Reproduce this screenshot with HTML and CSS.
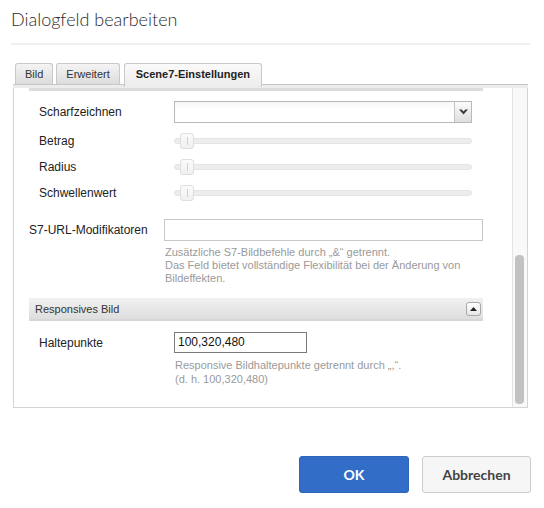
FILE: index.html
```html
<!DOCTYPE html>
<html lang="de">
<head>
<meta charset="utf-8">
<title>Dialogfeld bearbeiten</title>
<link rel="stylesheet" href="styles.css">
</head>
<body>
<div class="dialog">
  <h1 class="title">Dialogfeld bearbeiten</h1>
  <div class="rule"></div>
  <div class="tabs">
    <div class="tab">Bild</div>
    <div class="tab">Erweitert</div>
    <div class="tab active">Scene7-Einstellungen</div>
  </div>
  <div class="panel">
    <div class="strip"></div>
    <div class="panel-body">
      <div class="content">
        <div class="topbar"></div>
        <div class="fs">
          <div class="row sel-row">
            <div class="label">Scharfzeichnen</div>
            <div class="select">
              <div class="select-field"></div>
              <div class="select-btn">
                <svg width="9" height="6" viewBox="0 0 9 6"><path d="M0 0.5 H2.6 L4.5 2.6 L6.4 0.5 H9 L4.5 5.5 Z" fill="#3a3a3a"/></svg>
              </div>
            </div>
          </div>
          <div class="row slider-row first">
            <div class="label">Betrag</div>
            <div class="slider"><div class="track"></div><div class="thumb"></div></div>
          </div>
          <div class="row slider-row">
            <div class="label">Radius</div>
            <div class="slider"><div class="track"></div><div class="thumb"></div></div>
          </div>
          <div class="row slider-row">
            <div class="label">Schwellenwert</div>
            <div class="slider"><div class="track"></div><div class="thumb"></div></div>
          </div>
        </div>
        <div class="row url-row">
          <div class="label">S7-URL-Modifikatoren</div>
          <div class="input"></div>
        </div>
        <div class="help help-url">Zusätzliche S7-Bildbefehle durch „&amp;“ getrennt.<br>Das Feld bietet vollständige Flexibilität bei der Änderung von<br>Bildeffekten.</div>
        <div class="section-header">
          <span>Responsives Bild</span>
          <div class="collapse">
            <svg width="7" height="4" viewBox="0 0 7 4"><path d="M0 4 L3.5 0 L7 4 Z" fill="#222"/></svg>
          </div>
        </div>
        <div class="section-body">
          <div class="row hp-row">
            <div class="label">Haltepunkte</div>
            <div class="input value">100,320,480</div>
          </div>
          <div class="help help-hp">Responsive Bildhaltepunkte getrennt durch „,“.<br>(d. h. 100,320,480)</div>
        </div>
      </div>
      <div class="scrollbar"><div class="sb-thumb"></div></div>
    </div>
  </div>
  <div class="actions">
    <button class="btn primary">OK</button>
    <button class="btn secondary">Abbrechen</button>
  </div>
</div>
</body>
</html>
```

FILE: styles.css
```css
* { box-sizing: border-box; }
html, body { margin: 0; padding: 0; background: #fff; }
body { font-family: "Liberation Sans", Arial, sans-serif; color: #222; }

.dialog { width: 544px; height: 508px; }

.title {
  margin: 0;
  padding: 8px 0 0 11px;
  font-family: Lato, "Open Sans", sans-serif;
  font-weight: 300;
  font-size: 18px;
  line-height: 22px;
  color: #2c2c2c;
}

.rule {
  margin: 13px 14px 0 11px;
  height: 2px;
  background: #efefef;
}

.tabs {
  margin-top: 18px;
  padding-left: 15px;
  display: flex;
  align-items: flex-end;
  gap: 3px;
  height: 21px;
  position: relative;
  z-index: 2;
}
.tab {
  height: 21px;
  padding: 0 9px;
  border: 1px solid #c8c8c8;
  border-bottom: none;
  border-radius: 3px 3px 0 0;
  background: linear-gradient(#f4f4f4, #dcdcdc);
  font-size: 11px;
  line-height: 20px;
  color: #333;
}
.tab.active {
  height: 24px;
  margin-bottom: -3px;
  margin-left: 1px;
  padding: 0 11px;
  background: linear-gradient(#fafafa, #ececec);
  font-weight: bold;
  color: #222;
}

.panel {
  margin-left: 13px;
  width: 515px;
  border: 1px solid #d4d4d4;
  border-top: none;
  position: relative;
  z-index: 1;
}
.strip {
  height: 4px;
  border-top: 1px solid #c8c8c8;
  background: #ececec;
  margin: 0 -1px;
}
.panel-body {
  display: flex;
  height: 319px;
}
.content {
  flex: 1;
  overflow: hidden;
  padding: 0 29px 0 15px;
}
.topbar { height: 3px; background: #dcdcdc; }

.row { display: flex; align-items: center; }
.label { width: 135px; flex: none; font-size: 12px; color: #222; }

.fs { padding: 0 11px 0 10px; }
.sel-row { margin-top: 10px; height: 22px; }
.select {
  flex: 1;
  height: 22px;
  display: flex;
  border: 1px solid #b8b8b8;
}
.select-field { flex: 1; background: linear-gradient(#f6f6f6, #fff 40%); }
.select-btn {
  width: 17px;
  border-left: 1px solid #c4c4c4;
  background: linear-gradient(#fbfbfb, #dedede);
  display: flex;
  align-items: center;
  justify-content: center;
}

.slider-row { height: 26px; }
.slider-row.first { margin-top: 5px; }
.slider { flex: 1; position: relative; height: 16px; display: flex; align-items: center; }
.track {
  flex: 1;
  height: 6px;
  border-radius: 3px;
  background: #ededed;
  border: 1px solid #e4e4e4;
}
.thumb {
  position: absolute;
  left: 6px;
  top: 0;
  width: 14px;
  height: 16px;
  border: 1px solid #dedede;
  border-radius: 3px;
  background: linear-gradient(#fbfbfb, #f0f0f0);
}
.thumb::after {
  content: "";
  position: absolute;
  left: 6px;
  top: 3px;
  width: 1px;
  height: 8px;
  background: #cfcfcf;
}

.url-row { margin-top: 13px; height: 22px; }
.input {
  height: 22px;
  flex: 1;
  border: 1px solid #c6c6c6;
  background: #fff;
}

.help {
  font-size: 11px;
  color: #9a9a9a;
  line-height: 13px;
}
.help-url { margin: 5px 0 0 136px; }

.section-header {
  margin-top: 13px;
  height: 23px;
  padding: 0 2px 0 6px;
  display: flex;
  align-items: center;
  justify-content: space-between;
  background: linear-gradient(#f1f1f1, #dedede);
  border-bottom: 2px solid #d6d6d6;
  font-size: 11px;
  color: #333;
}
.collapse {
  width: 15px;
  height: 14px;
  border: 1px solid #a8a8a8;
  border-radius: 3px;
  background: linear-gradient(#fff, #e6e6e6);
  display: flex;
  align-items: center;
  justify-content: center;
}

.section-body { padding-left: 10px; }
.hp-row { margin-top: 11px; height: 21px; }
.input.value {
  flex: none;
  width: 133px;
  height: 21px;
  border-color: #7a7a7a;
  font-size: 12px;
  line-height: 19px;
  padding-left: 3px;
  color: #111;
}
.help-hp { margin: 5px 0 0 136px; line-height: 14px; }

.scrollbar {
  width: 15px;
  border-left: 1px solid #e4e4e4;
  background: #f9f9f9;
  position: relative;
}
.sb-thumb {
  position: absolute;
  left: 2px;
  top: 167px;
  width: 9px;
  height: 149px;
  border-radius: 4px;
  background: #c2c2c2;
}

.actions {
  margin-top: 48px;
  padding-right: 13px;
  display: flex;
  justify-content: flex-end;
  gap: 13px;
}
.btn {
  height: 37px;
  border-radius: 3px;
  font-family: Lato, "Open Sans", sans-serif;
  font-weight: bold;
  font-size: 14px;
  cursor: pointer;
}
.btn.primary {
  width: 110px;
  background: #326ec8;
  border: 1px solid #2c64b8;
  color: #fff;
}
.btn.secondary {
  width: 109px;
  background: #f6f6f6;
  border: 1px solid #cdcdcd;
  color: #444;
}
```
